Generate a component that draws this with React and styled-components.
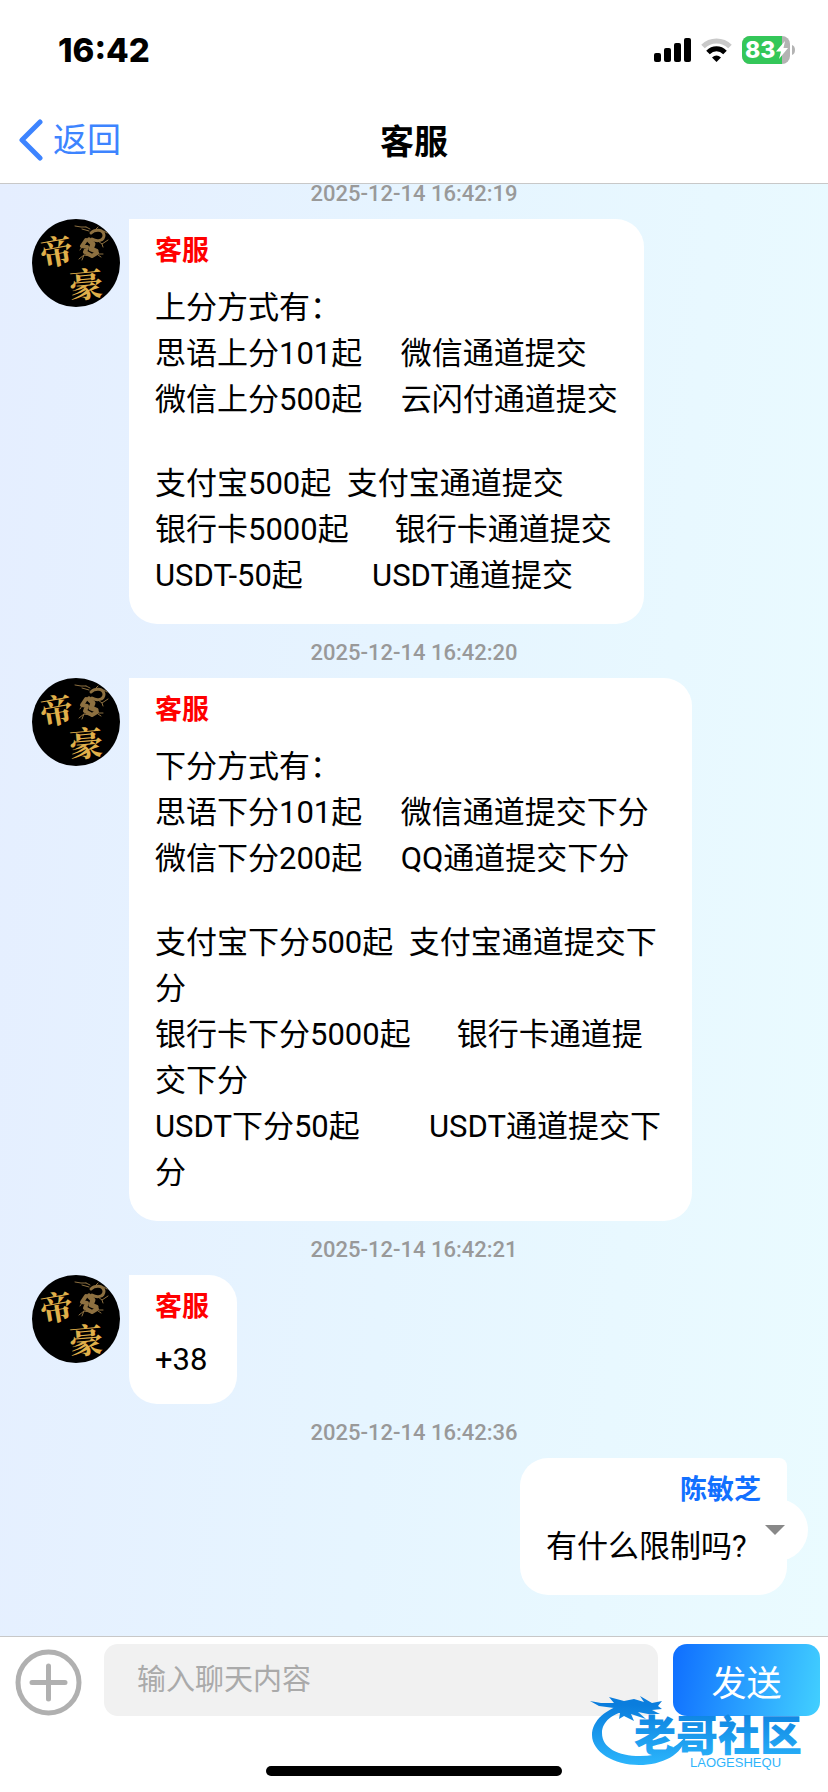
import React from "react";
import styled, { createGlobalStyle } from "styled-components";

const GlobalStyle = createGlobalStyle`
* {
box-sizing: border-box;
}
body {
margin: 0;
font-family: Roboto, "Noto Sans CJK SC", sans-serif;
color: #000;
}
`;

const Page = styled.div`
display: flex;
flex-direction: column;
height: 100vh;
background: #fff;
`;

const StatusBar = styled.div`
display: flex;
justify-content: space-between;
align-items: center;
height: 100px;
padding: 0 33px 0 58px;
`;

const Clock = styled.div`
font-family: Inter, sans-serif;
font-size: 33px;
font-weight: 800;
`;

const StatusIcons = styled.div`
display: flex;
align-items: center;
gap: 10px;
`;

const Header = styled.header`
display: grid;
grid-template-columns: 1fr auto 1fr;
align-items: center;
height: 84px;
padding: 0 19px;
border-bottom: 1px solid #c8c8c8;
`;

const BackButton = styled.button`
display: flex;
align-items: center;
gap: 10px;
padding: 0 0 4px;
border: 0;
background: none;
color: #3d84ff;
font-family: inherit;
font-size: 34px;
line-height: 48px;
`;

const Title = styled.h1`
margin: 0;
font-size: 34px;
font-weight: 700;
line-height: 48px;
`;

const Chat = styled.main`
flex: 1;
min-height: 0;
display: flex;
flex-direction: column;
justify-content: flex-end;
overflow: hidden;
padding: 0 41px 41px 32px;
background: linear-gradient(95deg, #e5eeff, #e6f5ff 50%, #eafbff);
`;

const Time = styled.time`
flex: none;
margin: 20px 0 16px;
padding-left: 9px;
color: #999;
font-size: 22px;
font-weight: 500;
line-height: 18px;
text-align: center;
`;

const Message = styled.div`
flex: none;
display: flex;
align-items: flex-start;
gap: 9px;
justify-content: ${(props) => (props.$mine ? "flex-end" : "flex-start")};
`;

const AvatarSvg = styled.svg`
flex: none;
width: 88px;
height: 88px;
overflow: visible;
`;

const Bubble = styled.div`
position: relative;
isolation: isolate;
min-width: ${(props) => (props.$mine ? "267px" : "108px")};
max-width: 563px;
padding: 12px 26px 25px;
border-radius: ${(props) => (props.$mine ? "28px 8px 28px 28px" : "0 28px 28px 28px")};
background: #fff;
`;

const Name = styled.div`
margin-bottom: 14px;
color: ${(props) => (props.$mine ? "#1270ff" : "#f00")};
font-size: 27px;
font-weight: 700;
line-height: 40px;
text-align: ${(props) => (props.$mine ? "right" : "left")};
`;

const Line = styled.div`
min-height: 38px;
font-size: 31px;
line-height: ${(props) => (props.$latin ? "38px" : "46px")};
white-space: pre-wrap;
`;

const MoreButton = styled.button`
position: absolute;
z-index: -1;
right: -21px;
top: 41px;
display: flex;
align-items: center;
justify-content: center;
width: 62px;
height: 62px;
padding: 0 4px 0 0;
border: 0;
border-radius: 50%;
background: #fff;
`;

const Footer = styled.footer`
position: relative;
border-top: 1px solid #c8c8c8;
padding: 7px 8px 16px;
`;

const InputBar = styled.form`
display: flex;
align-items: center;
padding-left: 7px;
`;

const PlusButton = styled.button`
flex: none;
display: flex;
margin: 4px 22px 0 0;
padding: 0;
border: 0;
background: none;
`;

const TextInput = styled.input`
flex: 1;
min-width: 0;
height: 72px;
margin-right: 15px;
padding: 0 33px;
border: 0;
border-radius: 14px;
background: #f1f1f1;
font-family: inherit;
font-size: 29px;
&::placeholder {
color: #aaa;
}
`;

const SendButton = styled.button`
flex: none;
width: 147px;
height: 72px;
border: 0;
border-radius: 14px;
background: linear-gradient(100deg, #0f6eff, #42d0ff);
color: #fff;
font-family: inherit;
font-size: 35px;
`;

const HomeIndicator = styled.div`
width: 296px;
height: 10px;
margin: 50px auto 0;
border-radius: 5px;
background: #000;
`;

const Watermark = styled.svg`
position: absolute;
right: 8px;
bottom: 20px;
width: 232px;
height: 84px;
overflow: visible;
pointer-events: none;
`;

const messages = [
  {
    time: "2025-12-14 16:42:19",
    name: "客服",
    lines: [
      "上分方式有：",
      "思语上分101起     微信通道提交",
      "微信上分500起     云闪付通道提交",
      "",
      "支付宝500起  支付宝通道提交",
      "银行卡5000起      银行卡通道提交",
      "USDT-50起         USDT通道提交",
    ],
  },
  {
    time: "2025-12-14 16:42:20",
    name: "客服",
    lines: [
      "下分方式有：",
      "思语下分101起     微信通道提交下分",
      "微信下分200起     QQ通道提交下分",
      "",
      "支付宝下分500起  支付宝通道提交下分",
      "银行卡下分5000起      银行卡通道提交下分",
      "USDT下分50起         USDT通道提交下分",
    ],
  },
  { time: "2025-12-14 16:42:21", name: "客服", lines: ["+38"] },
  { time: "2025-12-14 16:42:36", name: "陈敏芝", mine: true, lines: ["有什么限制吗?"] },
];

function Signal() {
  return (
    <svg width="37" height="24" viewBox="0 0 37 24">
      <rect x="0" y="15" width="7" height="9" rx="2" />
      <rect x="10" y="10" width="7" height="14" rx="2" />
      <rect x="20" y="5" width="7" height="19" rx="2" />
      <rect x="30" y="0" width="7" height="24" rx="2" />
    </svg>
  );
}

function Wifi() {
  return (
    <svg width="31" height="24" viewBox="0 0 31 24">
      <path d="M2 8.500C9.500 1 21.500 1 29 8.500" fill="none" stroke="#c9c9c9" strokeWidth="5" />
      <path d="M7 14.500C12 9.500 19 9.500 24 14.500" fill="none" stroke="#000" strokeWidth="5" />
      <path d="M15.500 24L11 19.500Q15.500 15.500 20 19.500Z" />
    </svg>
  );
}

function Battery() {
  return (
    <svg width="53" height="28" viewBox="0 0 53 28">
      <defs>
        <clipPath id="cell">
          <rect width="48" height="28" rx="8" />
        </clipPath>
      </defs>
      <g clipPath="url(#cell)">
        <rect width="48" height="28" fill="#b3b3b3" />
        <rect width="40" height="28" fill="#34c759" />
      </g>
      <path d="M50 9Q53 10 53 14Q53 18 50 19Z" fill="#b3b3b3" />
      <text x="3" y="22" fill="#fff" fontFamily="Inter, sans-serif" fontSize="23" fontWeight="800">83</text>
      <path d="M43 5L34 15.500H39L37 23L46 12H41.500Z" fill="#fff" />
    </svg>
  );
}

function Avatar() {
  return (
    <AvatarSvg viewBox="0 0 88 88" role="img" aria-label="帝豪">
      <circle cx="44" cy="44" r="44" fill="#000" />
      <g fontFamily='"Noto Serif CJK SC", "Noto Sans CJK SC", sans-serif' fontWeight="700" fill="#e0b04a">
        <text x="8" y="45" fontSize="33" transform="rotate(-10 24 32)">帝</text>
        <text x="37" y="78" fontSize="34" transform="rotate(-5 54 64)">豪</text>
      </g>
      <g fill="none" stroke="#8d7040" strokeLinecap="round" strokeLinejoin="round">
        <path d="M54 21L50 27L55 28L53 33L60 37L65 34" strokeWidth="4" />
        <path d="M57 21L61 25L59 30L64 32" strokeWidth="5" />
        <path d="M60 20C65 23 72 22 72 16C71 10 63 10 59 14" strokeWidth="3" />
        <path d="M43 7L49 8L54 8M50 10L57 12M54 8L58 10M66 22L70 25L76 21M70 25L71 28M50 28L48 31M58 37L52 36L47 40M52 36L50 41M66 36L69 38M67 35L71 35M72 12L75 14M64 10L66 8" strokeWidth="1" />
      </g>
    </AvatarSvg>
  );
}

function Logo() {
  return (
    <Watermark viewBox="0 0 232 84">
      <defs>
        <linearGradient id="blue" x1="0" y1="0" x2="0" y2="84" gradientUnits="userSpaceOnUse">
          <stop offset="0.200" stopColor="#0a7ddd" />
          <stop offset="0.900" stopColor="#2bb4fb" />
        </linearGradient>
      </defs>
      <g fill="url(#blue)">
        <path d="M38 16C18 20 4 33 4 47C4 64 26 77 51 77C74 77 95 67 98 48C88 61 72 68 52 68C30 68 14 60 14 45C14 34 24 25 42 22Z" />
        <path d="M2 13L13 15L26 15L21 9L36 13L46 11L56 14L52 8L64 15L74 13L70 18L74 21L64 22L72 26L60 26L50 24L58 31L43 26L46 33L36 28L31 31L32 25L20 25L26 20L11 18Z" />
        <text x="46" y="63" fontFamily='"Noto Sans CJK SC", sans-serif' fontSize="42" fontWeight="900">老哥社区</text>
        <text x="102" y="79" fontFamily='"Liberation Sans", sans-serif' fontSize="13">LAOGESHEQU</text>
      </g>
    </Watermark>
  );
}

function App() {
  return (
    <Page>
      <GlobalStyle />
      <StatusBar>
        <Clock>16:42</Clock>
        <StatusIcons>
          <Signal />
          <Wifi />
          <Battery />
        </StatusIcons>
      </StatusBar>
      <Header>
        <BackButton type="button">
          <svg width="24" height="42" viewBox="0 0 24 42" fill="none" stroke="currentColor" strokeWidth="5" strokeLinecap="round" strokeLinejoin="round">
            <path d="M21 3L3 21L21 39" />
          </svg>
          返回
        </BackButton>
        <Title>客服</Title>
      </Header>
      <Chat>
        {messages.map((message) => (
          <React.Fragment key={message.time}>
            <Time>{message.time}</Time>
            <Message $mine={message.mine}>
              {!message.mine && <Avatar />}
              <Bubble $mine={message.mine}>
                {message.mine && (
                  <MoreButton type="button" aria-label="更多">
                    <svg width="20" height="10" viewBox="0 0 20 10" fill="#888">
                      <path d="M0 0H20L10 10Z" />
                    </svg>
                  </MoreButton>
                )}
                <Name $mine={message.mine}>{message.name}</Name>
                {message.lines.map((line, i) => (
                  <Line key={i} $latin={line === "+38"}>{line}</Line>
                ))}
              </Bubble>
            </Message>
          </React.Fragment>
        ))}
      </Chat>
      <Footer>
        <InputBar onSubmit={(e) => e.preventDefault()}>
          <PlusButton type="button" aria-label="添加">
            <svg width="67" height="67" viewBox="0 0 67 67" fill="none" stroke="#b0b0b0" strokeWidth="5" strokeLinecap="round">
              <circle cx="33.500" cy="33.500" r="30.500" />
              <path d="M17 33.500H50M33.500 17V50" />
            </svg>
          </PlusButton>
          <TextInput type="text" placeholder="输入聊天内容" aria-label="输入聊天内容" />
          <SendButton type="submit">发送</SendButton>
        </InputBar>
        <HomeIndicator />
        <Logo />
      </Footer>
    </Page>
  );
}

export default App;
